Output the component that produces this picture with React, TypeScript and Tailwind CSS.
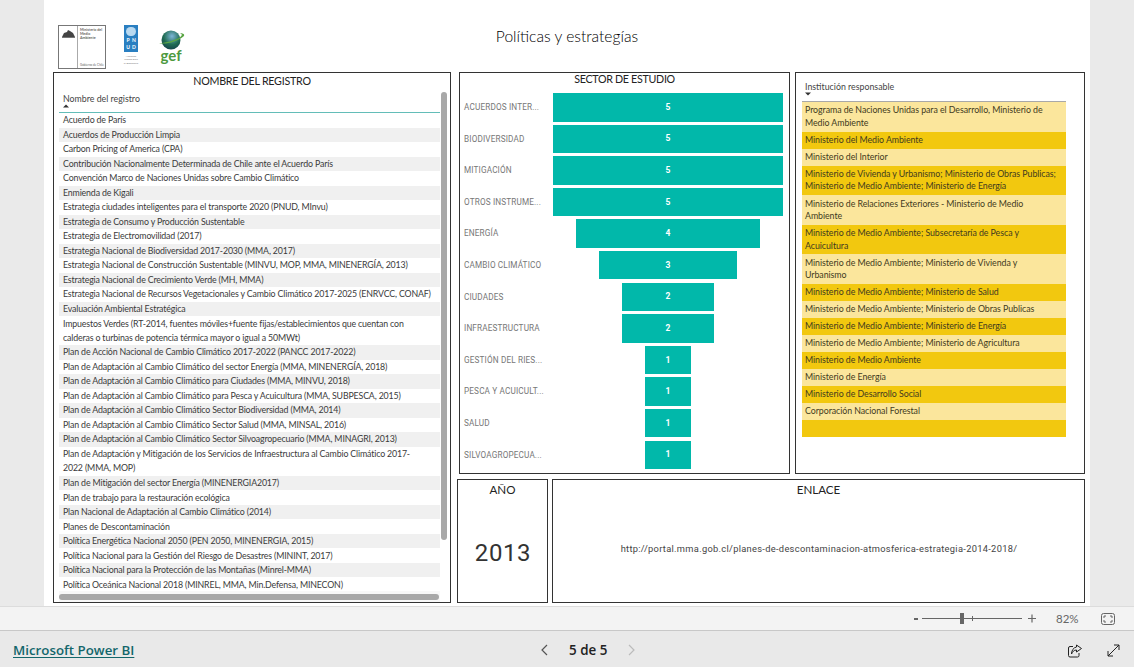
import React from "react";

const SEGOE = "font-['Lato','Noto_Sans',sans-serif]";

const registros: [string, boolean?][] = [
  ["Acuerdo de París"],
  ["Acuerdos de Producción Limpia"],
  ["Carbon Pricing of America (CPA)"],
  ["Contribución Nacionalmente Determinada de Chile ante el Acuerdo París"],
  ["Convención Marco de Naciones Unidas sobre Cambio Climático"],
  ["Enmienda de Kigali"],
  ["Estrategia ciudades inteligentes para el transporte 2020 (PNUD, MInvu)"],
  ["Estrategia de Consumo y Producción Sustentable"],
  ["Estrategia de Electromovilidad (2017)"],
  ["Estrategia Nacional de Biodiversidad 2017-2030 (MMA, 2017)"],
  ["Estrategia Nacional de Construcción Sustentable (MINVU, MOP, MMA, MINENERGÍA, 2013)"],
  ["Estrategia Nacional de Crecimiento Verde (MH, MMA)"],
  ["Estrategia Nacional de Recursos Vegetacionales y Cambio Climático 2017-2025 (ENRVCC, CONAF)"],
  ["Evaluación Ambiental Estratégica"],
  ["Impuestos Verdes (RT-2014, fuentes móviles+fuente fijas/establecimientos que cuentan con calderas o turbinas de potencia térmica mayor o igual a 50MWt)", true],
  ["Plan de Acción Nacional de Cambio Climático 2017-2022 (PANCC 2017-2022)"],
  ["Plan de Adaptación al Cambio Climático del sector Energía (MMA, MINENERGÍA, 2018)"],
  ["Plan de Adaptación al Cambio Climático para Ciudades (MMA, MINVU, 2018)"],
  ["Plan de Adaptación al Cambio Climático para Pesca y Acuicultura (MMA, SUBPESCA, 2015)"],
  ["Plan de Adaptación al Cambio Climático Sector Biodiversidad (MMA, 2014)"],
  ["Plan de Adaptación al Cambio Climático Sector Salud (MMA, MINSAL, 2016)"],
  ["Plan de Adaptación al Cambio Climático Sector Silvoagropecuario (MMA, MINAGRI, 2013)"],
  ["Plan de Adaptación y Mitigación de los Servicios de Infraestructura al Cambio Climático 2017-2022 (MMA, MOP)", true],
  ["Plan de Mitigación del sector Energía (MINENERGIA2017)"],
  ["Plan de trabajo para la restauración ecológica"],
  ["Plan Nacional de Adaptación al Cambio Climático (2014)"],
  ["Planes de Descontaminación"],
  ["Política Energética Nacional 2050 (PEN 2050, MINENERGIA, 2015)"],
  ["Política Nacional para la Gestión del Riesgo de Desastres (MININT, 2017)"],
  ["Política Nacional para la Protección de las Montañas (Minrel-MMA)"],
  ["Política Oceánica Nacional 2018 (MINREL, MMA, Min.Defensa, MINECON)"],
];

const sectores: [string, number][] = [
  ["ACUERDOS INTER...", 5],
  ["BIODIVERSIDAD", 5],
  ["MITIGACIÓN", 5],
  ["OTROS INSTRUME...", 5],
  ["ENERGÍA", 4],
  ["CAMBIO CLIMÁTICO", 3],
  ["CIUDADES", 2],
  ["INFRAESTRUCTURA", 2],
  ["GESTIÓN DEL RIES...", 1],
  ["PESCA Y ACUICULT...", 1],
  ["SALUD", 1],
  ["SILVOAGROPECUA...", 1],
];

const instituciones: [string, boolean?][] = [
  ["Programa de Naciones Unidas para el Desarrollo, Ministerio de Medio Ambiente", true],
  ["Ministerio del Medio Ambiente"],
  ["Ministerio del Interior"],
  ["Ministerio de Vivienda y Urbanismo; Ministerio de Obras Publicas; Ministerio de Medio Ambiente; Ministerio de Energía", true],
  ["Ministerio de Relaciones Exteriores - Ministerio de Medio Ambiente", true],
  ["Ministerio de Medio Ambiente; Subsecretaría de Pesca y Acuicultura", true],
  ["Ministerio de Medio Ambiente; Ministerio de Vivienda y Urbanismo", true],
  ["Ministerio de Medio Ambiente; Ministerio de Salud"],
  ["Ministerio de Medio Ambiente; Ministerio de Obras Publicas"],
  ["Ministerio de Medio Ambiente; Ministerio de Energía"],
  ["Ministerio de Medio Ambiente; Ministerio de Agricultura"],
  ["Ministerio de Medio Ambiente"],
  ["Ministerio de Energía"],
  ["Ministerio de Desarrollo Social"],
  ["Corporación Nacional Forestal"],
  [""],
];

function Logos() {
  return (
    <div className="flex items-start pl-[14px] pt-[25px]">
      <div className="relative h-[44px] w-[48px] border border-[#777] bg-white">
        <div className="absolute left-[18px] top-0 h-full w-px bg-[#aaa]" />
        <svg className="absolute left-[2px] top-[3px]" width="15" height="10" viewBox="0 0 15 10">
          <path d="M1 8 L3 4 L6 3 L7 1 L9 2 L12 4 L14 8 Z" fill="#444" />
          <rect x="1" y="8" width="13" height="1" fill="#777" />
        </svg>
        <div className="absolute left-[21px] top-[2px] whitespace-nowrap text-[3.6px] font-bold leading-[4.2px] text-[#666]">
          Ministerio del
          <br />
          Medio
          <br />
          Ambiente
        </div>
        <div className="absolute bottom-[1px] left-[21px] whitespace-nowrap text-[3px] leading-[4px] text-[#666]">
          Gobierno de Chile
        </div>
      </div>
      <div className="ml-[17px] flex w-[16px] flex-col items-center">
        <div className="flex h-[27px] w-[14px] flex-col items-center bg-[#2a7fc1] pt-[2px]">
          <div className="h-[9px] w-[10px] rounded-full bg-[#b9d9f0]" />
          <div className="mt-[1px] grid grid-cols-2 gap-x-[2px] text-center text-[5px] font-bold leading-[6.5px] text-white">
            <span>P</span>
            <span>N</span>
            <span>U</span>
            <span>D</span>
          </div>
        </div>
        <div className="mt-[3px] whitespace-nowrap text-center text-[2.6px] leading-[3.4px] text-[#777]">
          Naciones
          <br />
          Unidas para
          <br />
          el Desarrollo
        </div>
      </div>
      <div className="ml-[18px] flex w-[28px] flex-col items-center pt-[5px]">
        <svg width="28" height="20" viewBox="0 0 28 20">
          <defs>
            <radialGradient id="globe" cx="0.55" cy="0.3" r="0.8">
              <stop offset="0" stopColor="#7db5d8" />
              <stop offset="0.55" stopColor="#1f6c52" />
              <stop offset="1" stopColor="#12394a" />
            </radialGradient>
          </defs>
          <circle cx="14" cy="10" r="9.5" fill="url(#globe)" />
          <path d="M2 13 C8 15 20 12 27 6 C28 4 25 3 23 3.5 C26 4 25 6 22 8 C16 11 7 13 2 13Z" fill="#5aa544" />
        </svg>
        <span className="-mt-[1px] text-[15px] font-bold leading-[12px] text-[#4d9a3f]">gef</span>
      </div>
    </div>
  );
}

function Registro() {
  return (
    <section className="relative h-[531px] w-[398px] shrink-0 overflow-hidden border border-[#333] pt-[1px]">
      <div className="text-center text-[10.7px] leading-[14px] tracking-[-0.25px] text-[#222]">NOMBRE DEL REGISTRO</div>
      <div className="pl-[5px] pr-[10px]">
        <div className="h-[25px] border-b border-[#63bdb8] pl-[4px] pt-[4px] text-[8.8px] leading-[13px] text-[#444]">
          <div>Nombre del registro</div>
          <svg className="-mt-[1px]" width="6" height="4" viewBox="0 0 6 4">
            <path d="M0 3.5 L3 0.5 L6 3.5Z" fill="#333" />
          </svg>
        </div>
        {registros.map(([t, two], i) => (
          <div
            key={t}
            className={`flex items-center pl-[4px] pr-[14px] text-[8.8px] leading-[14.2px] tracking-[-0.15px] text-[#3a3a3a] ${two ? "h-[29px]" : "h-[14.53px]"} ${i % 2 ? "bg-[#f0f0f0]" : "bg-white"}`}
          >
            <span className={two ? "" : "whitespace-nowrap"}>{t}</span>
          </div>
        ))}
      </div>
      <div className="absolute right-[3px] top-[19px] h-[448px] w-[6px] rounded-[3px] bg-[#a8a8a8]" />
      <div className="absolute bottom-0 left-[5px] h-[11px] w-[381px] bg-[#f8f8f8]" />
      <div className="absolute bottom-[2px] left-[5px] h-[6px] w-[380px] rounded-[3px] bg-[#a8a8a8]" />
    </section>
  );
}

function Funnel() {
  return (
    <section className="h-[402px] w-[331px] shrink-0 border border-[#333]">
      <div className="-mt-px text-center text-[10.7px] leading-[14px] tracking-[-0.3px] text-[#222]">SECTOR DE ESTUDIO</div>
      <div className="flex flex-col gap-[3.1px] pt-[7px]">
        {sectores.map(([name, v]) => (
          <div key={name} className="flex h-[28.5px] items-center">
            <span className="w-[93px] shrink-0 whitespace-nowrap pl-[4px] font-['Roboto',sans-serif] text-[8.2px] tracking-[0.15px] text-[#777]">
              {name}
            </span>
            <div className="flex flex-1 justify-center">
              <div
                className="flex h-[28.5px] items-center justify-center bg-[#01b8aa] font-['Roboto',sans-serif] text-[8.5px] font-bold text-white"
                style={{ width: v * 46 }}
              >
                {v}
              </div>
            </div>
            <div className="w-[6px] shrink-0" />
          </div>
        ))}
      </div>
    </section>
  );
}

function Institucion() {
  return (
    <section className="h-[402px] w-[290px] shrink-0 border border-[#333] pl-[6px] pr-[18px] pt-[7px]">
      <div className="h-[21px] pl-[3px] text-[8.8px] leading-[13px] text-[#444]">
        <div>Institución responsable</div>
        <svg className="-mt-[1px]" width="6" height="4" viewBox="0 0 6 4">
          <path d="M0 0.5 L3 3.5 L6 0.5Z" fill="#333" />
        </svg>
      </div>
      <div className="h-[1px] bg-[#a8a8a8]" />
      {instituciones.map(([t, two], i) => (
        <div
          key={i}
          className={`flex items-center pl-[3px] pr-[6px] text-[8.8px] leading-[12.4px] tracking-[-0.05px] text-[#3f3a20] ${two ? "h-[29.6px]" : "h-[17px]"} ${i % 2 ? "bg-[#f2c80f]" : "bg-[#fbe69c]"}`}
        >
          <span>{t}</span>
        </div>
      ))}
    </section>
  );
}

function Anio() {
  return (
    <section className="flex h-[124px] w-[91px] shrink-0 flex-col border border-[#333]">
      <div className="pt-[2px] text-center text-[11.6px] leading-[15px] text-[#222]">AÑO</div>
      <div className="flex flex-1 items-center justify-center pl-px pt-[6px] font-['Roboto',sans-serif] text-[24px] tracking-[0.6px] text-[#333]">
        2013
      </div>
    </section>
  );
}

function Enlace() {
  return (
    <section className="flex h-[124px] w-[533px] shrink-0 flex-col border border-[#333]">
      <div className="pt-[2px] text-center text-[11.6px] leading-[15px] text-[#222]">ENLACE</div>
      <div className="flex flex-1 items-center justify-center pb-[1px] pl-[1px] font-['Roboto',sans-serif] text-[9.3px] tracking-[0.3px] text-[#444]">
        http://portal.mma.gob.cl/planes-de-descontaminacion-atmosferica-estrategia-2014-2018/
      </div>
    </section>
  );
}

function ZoomBar() {
  return (
    <div className="flex h-[23px] items-center justify-end bg-[#f3f3f3] text-[#666]">
      <span className="mr-[4px] h-[2px] w-[4px] bg-[#666]" />
      <div className="relative h-px w-[100px] bg-[#666]">
        <div className="absolute left-[38px] top-[-5px] h-[11px] w-[4px] bg-[#666]" />
        <div className="absolute left-[50px] top-[-2px] h-[5px] w-px bg-[#666]" />
      </div>
      <svg className="ml-[6px]" width="8" height="9" viewBox="0 0 8 9">
        <path d="M4 0.5 V8.5 M0 4.5 H8" stroke="#666" strokeWidth="1.2" />
      </svg>
      <span className="ml-[20px] w-[30px] text-[11.5px]">82%</span>
      <svg className="ml-[15px] mr-[19px]" width="14" height="12" viewBox="0 0 14 12" fill="none">
        <rect x="0.5" y="0.5" width="13" height="11" rx="2" stroke="#666" />
        <path d="M3 5 V3 H5 M9 3 H11 V5 M3 7 V9 H5 M9 9 H11 V7" stroke="#666" />
      </svg>
    </div>
  );
}

function Footer() {
  return (
    <footer className="grid h-[37px] grid-cols-[527px_auto_1fr] items-center border-t border-[#c8c8c8] bg-[#e9e9e9] pl-[13px] pt-[3px] font-['Open_Sans',sans-serif]">
      <a className="justify-self-start text-[13.3px] font-semibold text-[#13666b] underline underline-offset-2">
        Microsoft Power BI
      </a>
      <div className="flex items-center">
        <svg width="8" height="12" viewBox="0 0 8 12" fill="none">
          <path d="M7 1 L2 6 L7 11" stroke="#555" strokeWidth="1.2" />
        </svg>
        <span className="mx-[21px] text-[13.4px] font-semibold text-[#222]">5 de 5</span>
        <svg width="8" height="12" viewBox="0 0 8 12" fill="none">
          <path d="M1 1 L6 6 L1 11" stroke="#bbb" strokeWidth="1.2" />
        </svg>
      </div>
      <div className="flex items-center justify-end gap-[25px] pr-[14px]">
        <svg width="14" height="14" viewBox="0 0 14 14" fill="none" stroke="#222" strokeWidth="1">
          <path d="M5 2.5 H2 a1.5 1.5 0 0 0 -1.5 1.5 V11.5 a1.5 1.5 0 0 0 1.5 1.5 H9.5 a1.5 1.5 0 0 0 1.5 -1.5 V9" />
          <path d="M8.5 1 L13.5 4.5 L8.5 8 V6 C6 6 4.5 7.5 3.5 10 C3.5 6.5 5.5 3.5 8.5 3 Z" />
        </svg>
        <svg width="13" height="13" viewBox="0 0 13 13" fill="none" stroke="#222" strokeWidth="1">
          <path d="M1 12 L12 1 M7 1 H12 V6 M1 7 V12 H6" />
        </svg>
      </div>
    </footer>
  );
}

export default function App() {
  return (
    <div className={`flex h-[667px] w-[1134px] flex-col overflow-hidden bg-[#eaeaea] ${SEGOE}`}>
      <main className="ml-[44px] h-[606px] w-[1046px] shrink-0 bg-white">
        <div className="relative h-[72px]">
          <Logos />
          <h1 className="absolute inset-x-0 top-[25px] text-center text-[15.6px] font-light leading-[22px] text-black">
            Políticas y estrategías
          </h1>
        </div>
        <div className="flex gap-[8px] pl-[9px]">
          <Registro />
          <div className="flex flex-col gap-[5px]">
            <div className="flex gap-[5px]">
              <Funnel />
              <Institucion />
            </div>
            <div className="-ml-[2px] flex gap-[4px]">
              <Anio />
              <Enlace />
            </div>
          </div>
        </div>
      </main>
      <div className="h-px bg-[#dcdcdc]" />
      <ZoomBar />
      <Footer />
    </div>
  );
}
